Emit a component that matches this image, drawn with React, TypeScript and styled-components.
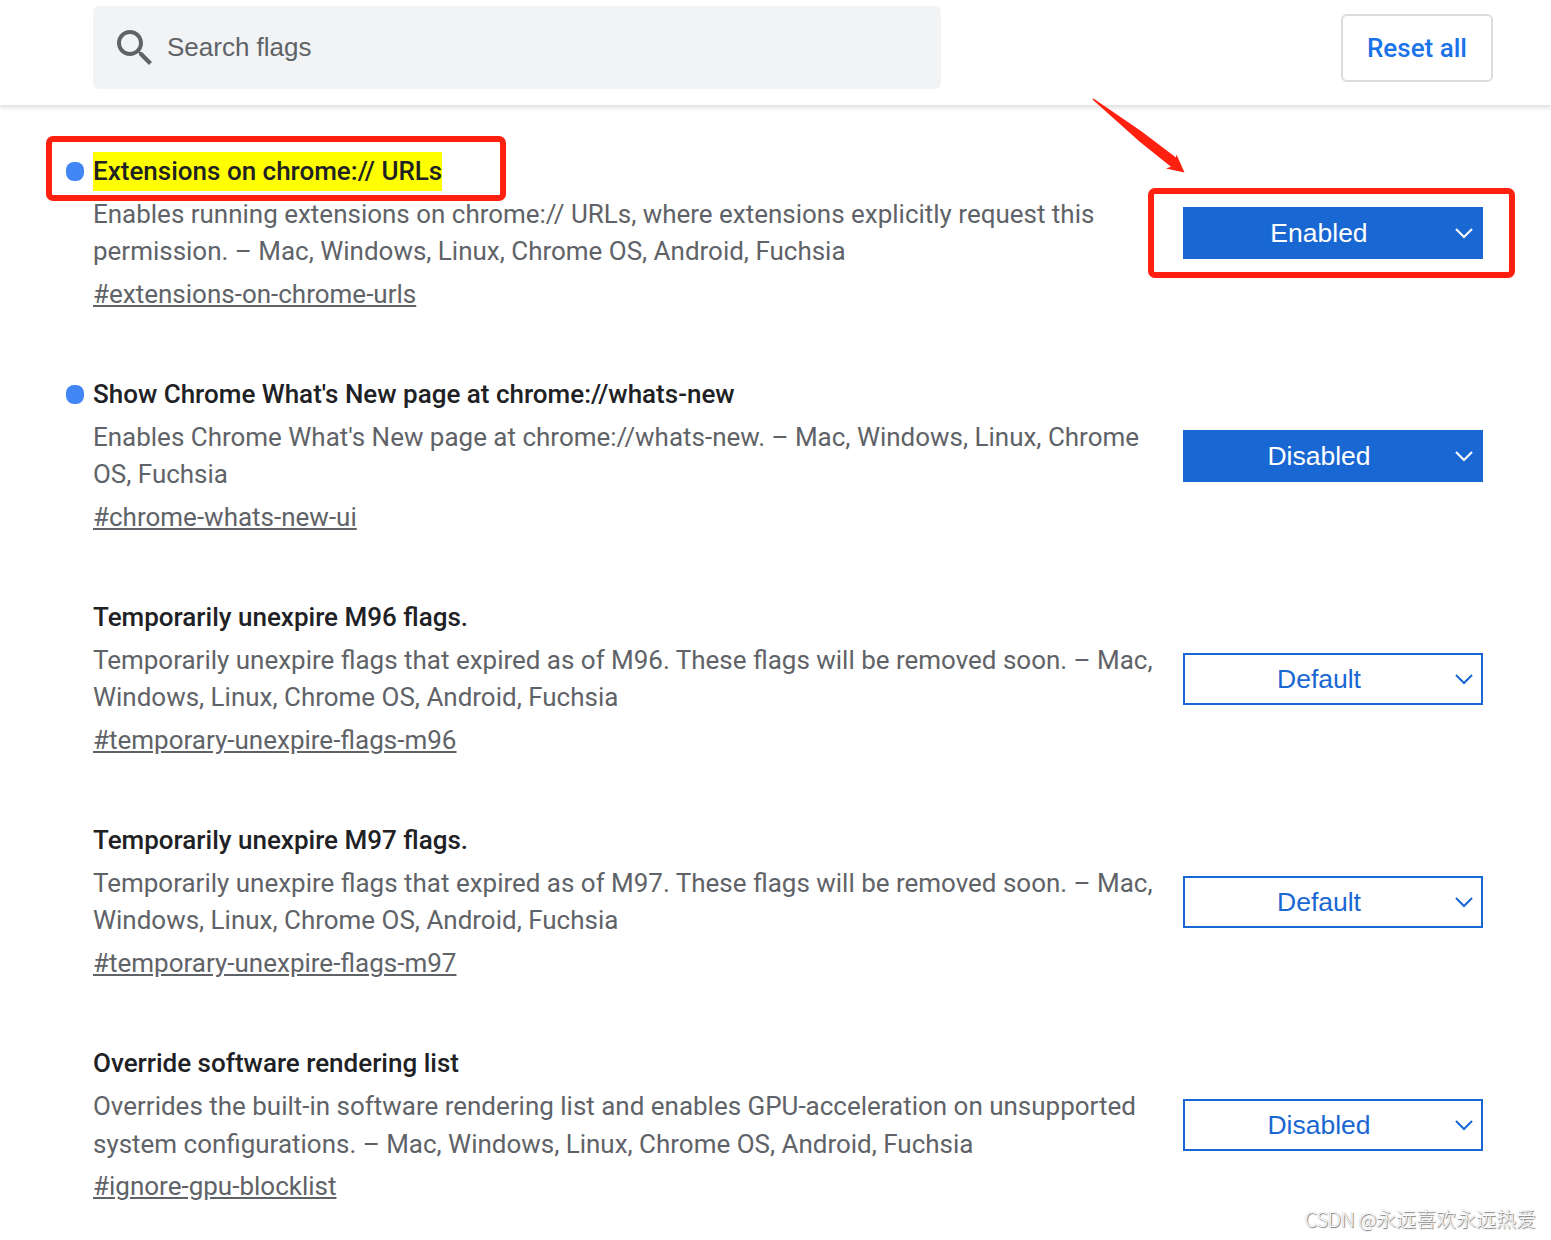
import React from "react";
import styled, { createGlobalStyle } from "styled-components";

const GlobalStyle = createGlobalStyle`
  * { box-sizing: border-box; }
  body { margin: 0; background: #fff; }
`;

const Page = styled.div`
  position: relative;
  width: 1551px;
  height: 1240px;
  overflow: hidden;
  background: #fff;
  font-family: Roboto, "Liberation Sans", sans-serif;
  font-size: 26px;
  color: #5f6368;
`;

const Header = styled.header`
  display: flex;
  justify-content: space-between;
  align-items: flex-start;
  height: 105px;
  padding: 6px 58px 0 93px;
  background: #fff;
  box-shadow: 0 3px 4px rgba(0, 0, 0, 0.12);
`;

const SearchBox = styled.label`
  display: flex;
  align-items: center;
  width: 848px;
  height: 83px;
  padding-left: 18px;
  border-radius: 6px;
  background: #f1f3f4;
`;

const SearchIcon = styled.svg`
  width: 48px;
  height: 48px;
  margin-right: 8px;
  fill: #5f6368;
`;

const SearchText = styled.span`
  padding-bottom: 2px;
  font: 26px/40px "Liberation Sans", Arial, sans-serif;
`;

const ResetButton = styled.button`
  width: 152px;
  height: 68px;
  margin-top: 8px;
  padding: 0;
  border: 2px solid #dadce0;
  border-radius: 6px;
  background: #fff;
  color: #1a73e8;
  font: 500 26px/40px Roboto, sans-serif;
`;

const List = styled.main`
  display: flex;
  flex-direction: column;
  gap: 61px;
  padding: 47px 68px 0 66px;
`;

const Details = styled.div`
  display: grid;
  grid-template-columns: 18px 1068px;
  column-gap: 9px;
  align-self: flex-start;
`;

const Dot = styled.span<{ $on: boolean }>`
  width: 18px;
  height: 19px;
  margin-top: 10px;
  border-radius: 8px;
  background: ${(p) => (p.$on ? "#4285f4" : "transparent")};
`;

const Title = styled.h2`
  margin: 0;
  font-size: 26px;
  font-weight: 500;
  line-height: 39px;
  color: #202124;
`;

const Mark = styled.span<{ $on: boolean }>`
  display: inline-block;
  background: ${(p) => (p.$on ? "#ff0" : "transparent")};
`;

const Description = styled.p`
  grid-column: 2;
  margin: 5px 0 4px;
  font-size: 25.98px;
  line-height: 37.4px;
`;

const Row = styled.section`
  display: flex;
  align-items: center;
  justify-content: space-between;
  height: 162px;

  &:last-child ${Description} {
    line-height: 37.6px;
  }
`;

const FlagLink = styled.a`
  grid-column: 2;
  justify-self: start;
  line-height: 39px;
  color: #5f6368;
  text-decoration: underline;
`;

const Select = styled.button<{ $filled: boolean }>`
  display: flex;
  align-items: center;
  width: 300px;
  height: 52px;
  padding: 0 8px 0 0;
  border: 2px solid #1967d2;
  border-radius: 0;
  background: ${(p) => (p.$filled ? "#1967d2" : "#fff")};
  color: ${(p) => (p.$filled ? "#fff" : "#1967d2")};
  font: 26.5px/40px "Liberation Sans", Arial, sans-serif;
`;

const SelectLabel = styled.span`
  flex: 1;
  padding-right: 2px;
  text-align: center;
`;

const Chevron = styled.svg`
  width: 18px;
  height: 12px;
  fill: none;
  stroke: currentColor;
  stroke-width: 2;
`;

const Outline = styled.div<{ $x: number; $y: number; $w: number; $h: number }>`
  position: absolute;
  left: ${(p) => p.$x}px;
  top: ${(p) => p.$y}px;
  width: ${(p) => p.$w}px;
  height: ${(p) => p.$h}px;
  border: 6px solid #ff2010;
  border-radius: 7px;
`;

const Arrow = styled.svg`
  position: absolute;
  left: 1090px;
  top: 96px;
  width: 100px;
  height: 80px;
  fill: #ff2010;
`;

const Watermark = styled.div`
  position: absolute;
  right: 15px;
  bottom: 6px;
  font: 300 20px/30px "Noto Sans CJK SC", sans-serif;
  color: #fff;
  text-shadow: 1px 1px 1px #777, 0 0 1px #aaa;
  white-space: nowrap;
`;

const WatermarkSite = styled.span`
  letter-spacing: -0.4px;
`;

interface Flag {
  title: string;
  lines: [string, string];
  id: string;
  value: string;
  changed: boolean;
  marked?: boolean;
  filled: boolean;
}

const flags: Flag[] = [
  {
    title: "Extensions on chrome:// URLs",
    lines: [
      "Enables running extensions on chrome:// URLs, where extensions explicitly request this",
      "permission. – Mac, Windows, Linux, Chrome OS, Android, Fuchsia",
    ],
    id: "#extensions-on-chrome-urls",
    value: "Enabled",
    changed: true,
    marked: true,
    filled: true,
  },
  {
    title: "Show Chrome What's New page at chrome://whats-new",
    lines: [
      "Enables Chrome What's New page at chrome://whats-new. – Mac, Windows, Linux, Chrome",
      "OS, Fuchsia",
    ],
    id: "#chrome-whats-new-ui",
    value: "Disabled",
    changed: true,
    filled: true,
  },
  {
    title: "Temporarily unexpire M96 flags.",
    lines: [
      "Temporarily unexpire flags that expired as of M96. These flags will be removed soon. – Mac,",
      "Windows, Linux, Chrome OS, Android, Fuchsia",
    ],
    id: "#temporary-unexpire-flags-m96",
    value: "Default",
    changed: false,
    filled: false,
  },
  {
    title: "Temporarily unexpire M97 flags.",
    lines: [
      "Temporarily unexpire flags that expired as of M97. These flags will be removed soon. – Mac,",
      "Windows, Linux, Chrome OS, Android, Fuchsia",
    ],
    id: "#temporary-unexpire-flags-m97",
    value: "Default",
    changed: false,
    filled: false,
  },
  {
    title: "Override software rendering list",
    lines: [
      "Overrides the built-in software rendering list and enables GPU-acceleration on unsupported",
      "system configurations. – Mac, Windows, Linux, Chrome OS, Android, Fuchsia",
    ],
    id: "#ignore-gpu-blocklist",
    value: "Disabled",
    changed: false,
    filled: false,
  },
];

export default function App() {
  return (
    <Page>
      <GlobalStyle />
      <Header>
        <SearchBox>
          <SearchIcon viewBox="0 0 24 24">
            <path d="M15.5 14h-.79l-.28-.27C15.41 12.59 16 11.11 16 9.5 16 5.91 13.09 3 9.5 3S3 5.91 3 9.5 5.91 16 9.5 16c1.61 0 3.09-.59 4.23-1.57l.27.28v.79l5 4.99L20.49 19l-4.99-5zm-6 0C7.01 14 5 11.99 5 9.5S7.01 5 9.5 5 14 7.01 14 9.5 11.99 14 9.5 14z" />
          </SearchIcon>
          <SearchText>Search flags</SearchText>
        </SearchBox>
        <ResetButton>Reset all</ResetButton>
      </Header>
      <List>
        {flags.map((f) => (
          <Row key={f.id}>
            <Details>
              <Dot $on={f.changed} />
              <Title>
                <Mark $on={!!f.marked}>{f.title}</Mark>
              </Title>
              <Description>
                {f.lines[0]}
                <br />
                {f.lines[1]}
              </Description>
              <FlagLink>{f.id}</FlagLink>
            </Details>
            <Select $filled={f.filled}>
              <SelectLabel>{f.value}</SelectLabel>
              <Chevron viewBox="0 0 18 12">
                <path d="M1 2l8 8 8-8" />
              </Chevron>
            </Select>
          </Row>
        ))}
      </List>
      <Outline $x={46} $y={136} $w={460} $h={65} />
      <Outline $x={1148} $y={188} $w={367} $h={90} />
      <Arrow viewBox="1090 96 100 80">
        <path d="M1092.5 99.500L1093.500 98.500L1141 131L1176 157.500L1176.500 154.500L1184.500 172.500L1166 168.500L1171 166.800L1140 142Z" />
      </Arrow>
      <Watermark>
        <WatermarkSite>CSDN @</WatermarkSite>永远喜欢永远热爱
      </Watermark>
    </Page>
  );
}
